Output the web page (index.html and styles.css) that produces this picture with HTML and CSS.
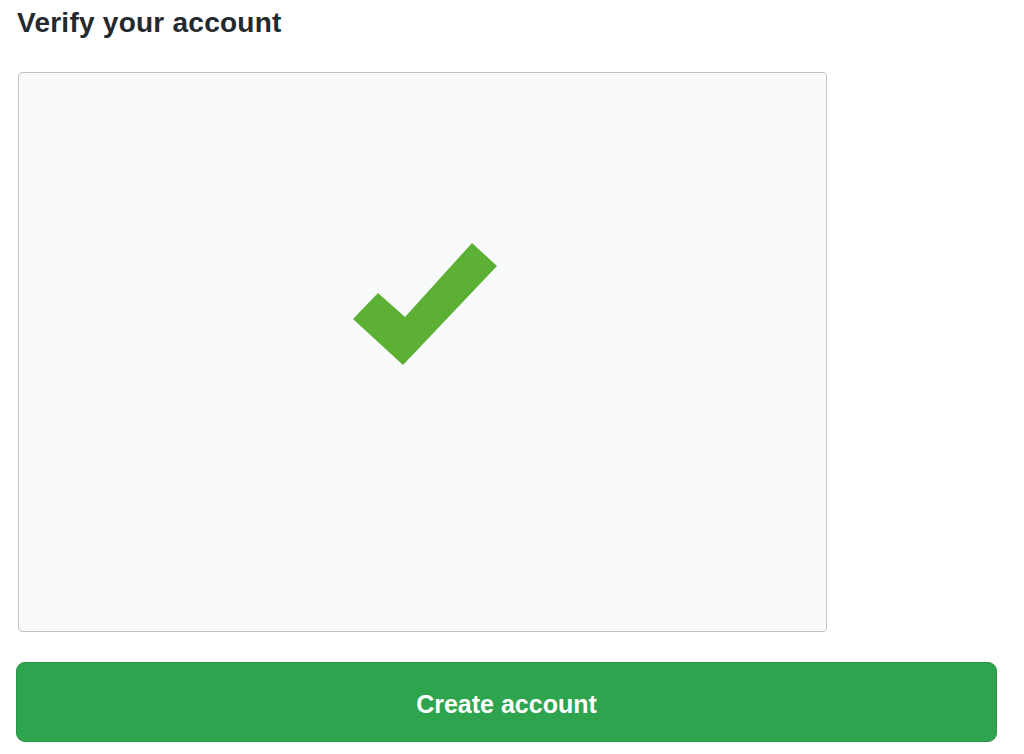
FILE: index.html
```html
<!DOCTYPE html>
<html lang="en">
<head>
<meta charset="utf-8">
<title>Verify your account</title>
<link rel="stylesheet" href="styles.css">
</head>
<body>
<main class="page">
  <h2 class="title">Verify your account</h2>
  <div class="captcha">
    <svg class="check" width="146" height="124" viewBox="0 0 146 124" aria-hidden="true">
      <polygon points="0,76 25,50 52,74 119,0 144,23 50,122" fill="#5cb034"/>
    </svg>
  </div>
  <button class="btn" type="button">Create account</button>
</main>
</body>
</html>
```
FILE: styles.css
```css
html, body {
  margin: 0;
  padding: 0;
  background: #ffffff;
}
body {
  font-family: "Liberation Sans", Arial, sans-serif;
  color: #24292e;
}
.page {
  padding: 8px 27px 0 16px;
  display: flex;
  flex-direction: column;
}
.title {
  margin: 0 0 0 1px;
  font-size: 28px;
  line-height: 30px;
  font-weight: 700;
  letter-spacing: 0.25px;
  color: #24292e;
}
.captcha {
  margin: 34px 0 0 2px;
  width: 807px;
  height: 558px;
  border: 1px solid #c4c5c7;
  border-radius: 4px;
  background: #f9fafb;
  display: flex;
  align-items: center;
  justify-content: center;
}
.check {
  display: block;
  margin: 0 0 94px 0;
  transform: translateX(3px);
}
.btn {
  margin-top: 30px;
  height: 80px;
  width: 981px;
  border: 1px solid #2a9347;
  border-radius: 9px;
  background: #2ea44f;
  color: #ffffff;
  font-family: "Liberation Sans", Arial, sans-serif;
  font-size: 25px;
  font-weight: 700;
  padding: 4px 0 0 0;
}
```
